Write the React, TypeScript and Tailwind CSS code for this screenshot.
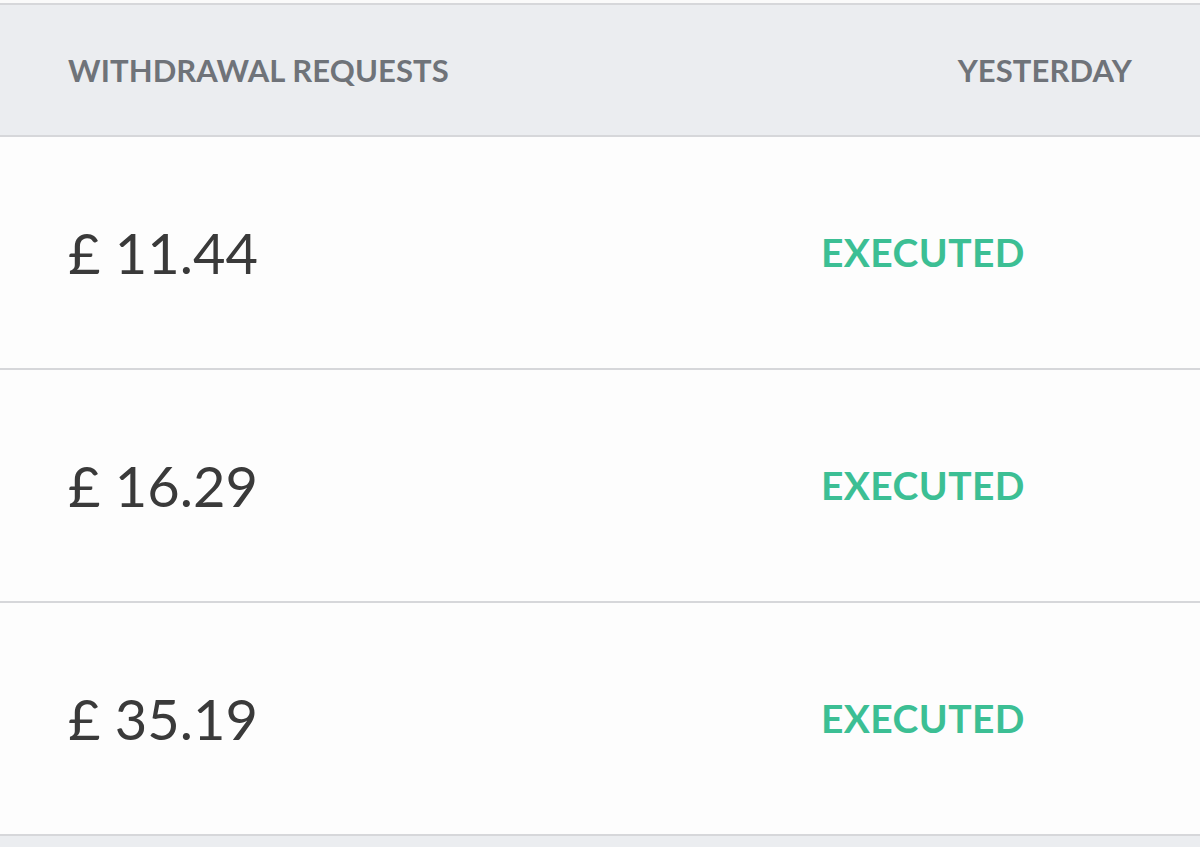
export default function App() {
  const rows = ['£ 11.44', '£ 16.29', '£ 35.19']

  return (
    <div className="h-[847px] w-full bg-[#ebedf0] font-['Lato',sans-serif]">
      <div className="h-[3px] bg-[#fafafa]" />
      <div className="flex h-[134px] items-center justify-between border-y-2 border-[#d6d7da] bg-[#ebedf0] px-[68px]">
        <span className="text-[31px] font-bold tracking-[0.1px] text-[#6f7379]">WITHDRAWAL REQUESTS</span>
        <span className="text-[31px] font-bold tracking-[0.1px] text-[#6f7379]">YESTERDAY</span>
      </div>
      {rows.map((amount, i) => (
        <div
          key={i}
          className="flex h-[233px] items-center border-b-2 border-[#d6d7da] bg-[#fdfdfd] px-[68px]"
        >
          <span className="flex-1 text-[56px] text-[#3a3a3a]">{amount}</span>
          <span className="w-[311px] text-[39px] font-bold tracking-[0.4px] text-[#3cbf94]">EXECUTED</span>
        </div>
      ))}
    </div>
  )
}
